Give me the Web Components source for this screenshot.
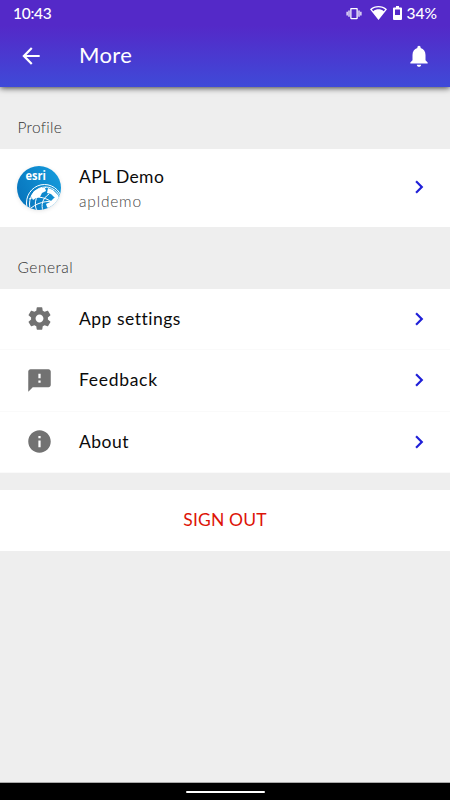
<!DOCTYPE html>
<html lang="en">
<head>
<meta charset="utf-8">
<title>More</title>
<style>
  body {
    margin: 0;
    background: #eee;
    font-family: Lato, "Open Sans", sans-serif;
    color: #0b0b0b;
  }
</style>
</head>
<body>
<more-screen>
  <app-header slot="header" time="10:43" battery="34%" heading="More"></app-header>

  <section-label style="--track: 0.3px">Profile</section-label>
  <profile-row name="APL Demo" username="apldemo"></profile-row>

  <section-label style="--track: 0.5px">General</section-label>
  <menu-row icon="settings" style="--track: 0.5px">App settings</menu-row>
  <menu-row icon="feedback" style="--track: 0.7px">Feedback</menu-row>
  <menu-row icon="info" style="--track: 0.5px">About</menu-row>

  <sign-out>SIGN OUT</sign-out>
  <nav-bar slot="footer"></nav-bar>
</more-screen>

<script>
const ICONS = {
  back: '<path d="M20 11H7.83l5.59-5.59L12 4l-8 8 8 8 1.41-1.41L7.83 13H20v-2z"/>',
  bell: '<path d="M12 22c1.1 0 2-.9 2-2h-4c0 1.1.89 2 2 2zm6-6v-5c0-3.07-1.64-5.64-4.5-6.32V4c0-.83-.67-1.5-1.5-1.5s-1.5.67-1.5 1.5v.68C7.63 5.36 6 7.92 6 11v5l-2 2v1h16v-1l-2-2z"/>',
  settings: '<path d="M19.43 12.98c.04-.32.07-.64.07-.98s-.03-.66-.07-.98l2.11-1.65c.19-.15.24-.42.12-.64l-2-3.46c-.12-.22-.39-.3-.61-.22l-2.49 1c-.52-.4-1.08-.73-1.69-.98l-.38-2.65C14.46 2.18 14.25 2 14 2h-4c-.25 0-.46.18-.49.42l-.38 2.65c-.61.25-1.17.59-1.69.98l-2.49-1c-.23-.09-.49 0-.61.22l-2 3.46c-.13.22-.07.49.12.64l2.11 1.65c-.04.32-.07.65-.07.98s.03.66.07.98l-2.11 1.65c-.19.15-.24.42-.12.64l2 3.46c.12.22.39.3.61.22l2.49-1c.52.4 1.08.73 1.69.98l.38 2.65c.03.24.24.42.49.42h4c.25 0 .46-.18.49-.42l.38-2.65c.61-.25 1.17-.59 1.69-.98l2.49 1c.23.09.49 0 .61-.22l2-3.46c.12-.22.07-.49-.12-.64l-2.11-1.65zM12 15.5c-1.93 0-3.5-1.57-3.5-3.5s1.57-3.5 3.5-3.5 3.5 1.57 3.5 3.5-1.57 3.5-3.5 3.5z"/>',
  feedback: '<path d="M20 2H4c-1.1 0-1.99.9-1.99 2L2 22l4-4h14c1.1 0 2-.9 2-2V4c0-1.1-.9-2-2-2zm-7 12h-2v-2h2v2zm0-4h-2V6h2v4z"/>',
  info: '<path d="M12 2C6.48 2 2 6.48 2 12s4.48 10 10 10 10-4.48 10-10S17.52 2 12 2zm1 15h-2v-6h2v6zm0-8h-2V7h2v2z"/>',
  chevron: '<path d="M10 6L8.59 7.41 13.17 12l-4.58 4.59L10 18l6-6z"/>',
  vibrate: '<path d="M0 15h2V9H0v6zm3 2h2V7H3v10zm19-8v6h2V9h-2zm-3 8h2V7h-2v10zM16.5 3h-9C6.67 3 6 3.67 6 4.5v15c0 .83.67 1.5 1.5 1.5h9c.83 0 1.5-.67 1.5-1.5v-15c0-.83-.67-1.5-1.5-1.5zM16 19H8V5h8v14z"/>',
};

class MdIcon extends HTMLElement {
  constructor() {
    super();
    this.attachShadow({ mode: 'open' });
  }

  connectedCallback() {
    this.shadowRoot.innerHTML = `
      <style>
        :host { display: block; width: 24px; height: 24px; flex: none; }
        svg { display: block; width: 100%; height: 100%; fill: currentColor; }
      </style>
      <svg viewBox="0 0 24 24">${ICONS[this.getAttribute('name')]}</svg>
    `;
  }
}

class MoreScreen extends HTMLElement {
  constructor() {
    super();
    const shadow = this.attachShadow({ mode: 'open' });
    shadow.innerHTML = `
      <style>
        :host {
          display: flex;
          flex-direction: column;
          height: 100vh;
          overflow: hidden;
        }
        main { flex: 1; min-height: 0; }
      </style>
      <slot name="header"></slot>
      <main><slot></slot></main>
      <slot name="footer"></slot>
    `;
  }
}

class AppHeader extends HTMLElement {
  constructor() {
    super();
    this.attachShadow({ mode: 'open' });
  }

  connectedCallback() {
    this.shadowRoot.innerHTML = `
      <style>
        :host {
          display: block;
          height: 87px;
          background: linear-gradient(#5429c8 0, #5429c8 26px, #3f4ad8 87px);
          box-shadow: 0 1px 6px rgba(0, 0, 0, 0.75);
          color: #fff;
          flex: none;
          z-index: 1;
        }
        .status {
          display: flex;
          align-items: center;
          height: 27px;
          padding: 0 13px;
          font: 500 15.5px/27px Lato, sans-serif;
        }
        .time { flex: 1; letter-spacing: -0.3px; }
        .vibrate { width: 16px; height: 15px; margin-top: -1px; }
        .wifi { width: 17px; height: 14px; margin-left: 8px; margin-top: -1px; fill: #fff; }
        .battery { width: 9px; height: 14px; margin: -1px 5px 0 6px; fill: #fff; }
        .bar {
          display: flex;
          align-items: center;
          height: 58px;
          padding: 0 18px;
        }
        h1 {
          flex: 1;
          margin: -2px 0 0 35px;
          font-size: 22px;
          font-weight: 400;
          line-height: 58px;
          letter-spacing: 0.4px;
        }
        .back { width: 26px; height: 26px; }
        .bell { width: 26px; height: 26px; }
      </style>
      <div class="status">
        <span class="time">${this.getAttribute('time')}</span>
        <md-icon class="vibrate" name="vibrate"></md-icon>
        <svg class="wifi" viewBox="0 0 17 14">
          <path fill-rule="evenodd" d="M8.5 14L0 3.3C2.5 1.1 5.3 0 8.5 0s6 1.1 8.5 3.3zM1.9 3.5L3.2 5.2C6.3 2.6 10.7 2.6 13.8 5.2l1.3-1.7C11.2.6 5.8.6 1.9 3.5z"/>
        </svg>
        <svg class="battery" viewBox="0 0 9 14">
          <path fill-rule="evenodd" d="M3 0h3v1.5h2q1 0 1 1V13q0 1-1 1H1q-1 0-1-1V2.5q0-1 1-1h2zM2 3.5V9h5V3.5z"/>
        </svg>
        <span>${this.getAttribute('battery')}</span>
      </div>
      <div class="bar">
        <md-icon class="back" name="back"></md-icon>
        <h1>${this.getAttribute('heading')}</h1>
        <md-icon class="bell" name="bell"></md-icon>
      </div>
    `;
  }
}

class SectionLabel extends HTMLElement {
  constructor() {
    super();
    const shadow = this.attachShadow({ mode: 'open' });
    shadow.innerHTML = `
      <style>
        :host {
          display: block;
          box-sizing: border-box;
          height: 62px;
          padding: 30px 17.5px 0;
          font-size: 15.5px;
          line-height: 20px;
          font-weight: 300;
          letter-spacing: var(--track, 0);
          color: #333;
        }
      </style>
      <slot></slot>
    `;
  }
}

class EsriAvatar extends HTMLElement {
  constructor() {
    super();
    const shadow = this.attachShadow({ mode: 'open' });
    shadow.innerHTML = `
      <style>
        :host {
          display: block;
          width: 44px;
          height: 44px;
          flex: none;
          border-radius: 50%;
          box-shadow: 0 1px 4px rgba(0, 0, 0, 0.1);
        }
        svg { display: block; }
        text { font: 700 13px "Open Sans", sans-serif; fill: #fff; }
      </style>
      <svg width="44" height="44" viewBox="0 0 44 44">
        <defs>
          <linearGradient id="sky" x1="0" y1="0.7" x2="1" y2="0.2">
            <stop offset="0" stop-color="#0875bd"/>
            <stop offset="1" stop-color="#149bdc"/>
          </linearGradient>
          <clipPath id="disc"><circle cx="22" cy="22" r="22"/></clipPath>
        </defs>
        <g clip-path="url(#disc)">
          <rect width="44" height="44" fill="url(#sky)"/>
          <g fill="none" stroke="#fff">
            <ellipse cx="27.5" cy="37" rx="18" ry="18.5" stroke-width="1"/>
            <ellipse cx="28.500" cy="38" rx="16" ry="17" stroke-width="1"/>
            <path stroke-width="1" d="M12 33C20 29 30 31 40 40M14 42C23 35 33 34 44 37M29 21C19 28 16 37 20 45M32 28C25 33 24 39 26 45"/>
          </g>
          <path fill="#fff" d="M14 30l3-5 6-3 5 0 1 3-4 2-2 4-4 1-3 2-1-2zM31 22l5 2 5 5 2 5-5-2-4-4-4-1zM29 38l4-2 4-4 3-1 4 2-3 9-8 2-3-3z"/>
        </g>
        <text x="8.5" y="14" textLength="20.5" lengthAdjust="spacingAndGlyphs">esri</text>
      </svg>
    `;
  }
}

class ProfileRow extends HTMLElement {
  constructor() {
    super();
    this.attachShadow({ mode: 'open' });
  }

  connectedCallback() {
    this.shadowRoot.innerHTML = `
      <style>
        :host {
          display: flex;
          box-sizing: border-box;
          height: 78px;
          padding: 17px 18px 0 17px;
          background: #fff;
        }
        .text { flex: 1; margin-left: 18px; }
        .name { font-size: 17.5px; line-height: 22px; letter-spacing: 0.4px; }
        .user {
          margin-top: 3px;
          font-size: 15.5px;
          line-height: 20px;
          font-weight: 300;
          letter-spacing: 0.8px;
          color: #444;
        }
        .chevron { width: 26px; height: 26px; color: #2020d8; margin-top: 8px; }
      </style>
      <esri-avatar></esri-avatar>
      <div class="text">
        <div class="name">${this.getAttribute('name')}</div>
        <div class="user">${this.getAttribute('username')}</div>
      </div>
      <md-icon class="chevron" name="chevron"></md-icon>
    `;
  }
}

class MenuRow extends HTMLElement {
  constructor() {
    super();
    this.attachShadow({ mode: 'open' });
  }

  connectedCallback() {
    this.shadowRoot.innerHTML = `
      <style>
        :host {
          display: flex;
          align-items: center;
          box-sizing: border-box;
          height: 61.33px;
          padding: 0 18px 0.5px 26px;
          background: #fff;
          border-bottom: 1px solid #fafafa;
        }
        .icon { width: 27px; height: 27px; color: #727272; }
        .label {
          flex: 1;
          margin-left: 26px;
          font-size: 17.5px;
          line-height: 24px;
          letter-spacing: var(--track, 0);
        }
        .chevron { width: 26px; height: 26px; color: #2020d8; }
      </style>
      <md-icon class="icon" name="${this.getAttribute('icon')}"></md-icon>
      <span class="label"><slot></slot></span>
      <md-icon class="chevron" name="chevron"></md-icon>
    `;
  }
}

class SignOut extends HTMLElement {
  constructor() {
    super();
    const shadow = this.attachShadow({ mode: 'open' });
    shadow.innerHTML = `
      <style>
        :host {
          display: block;
          height: 61px;
          margin-top: 17.5px;
          background: #fff;
          color: #dd1408;
          font-size: 17.5px;
          line-height: 60px;
          letter-spacing: 0.15px;
          text-align: center;
        }
      </style>
      <slot></slot>
    `;
  }
}

class NavBar extends HTMLElement {
  constructor() {
    super();
    const shadow = this.attachShadow({ mode: 'open' });
    shadow.innerHTML = `
      <style>
        :host {
          display: flex;
          justify-content: center;
          align-items: center;
          box-sizing: border-box;
          height: 18px;
          padding-top: 1px;
          background: #000;
          border-top: 1px solid #aaa;
          flex: none;
        }
        span { width: 79px; height: 2.5px; border-radius: 2px; background: #fff; }
      </style>
      <span></span>
    `;
  }
}

customElements.define('md-icon', MdIcon);
customElements.define('more-screen', MoreScreen);
customElements.define('app-header', AppHeader);
customElements.define('section-label', SectionLabel);
customElements.define('esri-avatar', EsriAvatar);
customElements.define('profile-row', ProfileRow);
customElements.define('menu-row', MenuRow);
customElements.define('sign-out', SignOut);
customElements.define('nav-bar', NavBar);
</script>
</body>
</html>
